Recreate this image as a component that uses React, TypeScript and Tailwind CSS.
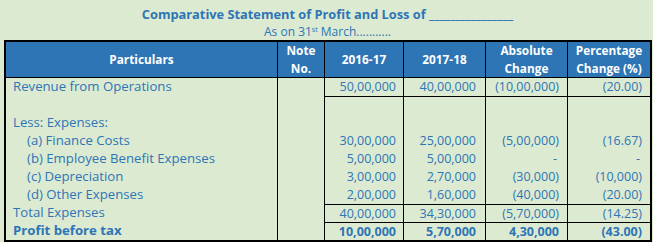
import React from "react";

type Row = {
  label: string;
  indent?: boolean;
  bold?: boolean;
  vals: string[];
  lineTop?: boolean;
};

const rows: Row[] = [
  { label: "Revenue from Operations", vals: ["50,00,000", "40,00,000", "(10,00,000)", "(20.00)"] },
  { label: "", vals: ["", "", "", ""], lineTop: true },
  { label: "Less: Expenses:", vals: ["", "", "", ""] },
  { label: "(a) Finance Costs", indent: true, vals: ["30,00,000", "25,00,000", "(5,00,000)", "(16.67)"] },
  { label: "(b) Employee Benefit Expenses", indent: true, vals: ["5,00,000", "5,00,000", "-", "-"] },
  { label: "(c) Depreciation", indent: true, vals: ["3,00,000", "2,70,000", "(30,000)", "(10,000)"] },
  { label: "(d) Other Expenses", indent: true, vals: ["2,00,000", "1,60,000", "(40,000)", "(20.00)"] },
  { label: "Total Expenses", vals: ["40,00,000", "34,30,000", "(5,70,000)", "(14.25)"], lineTop: true },
  { label: "Profit before tax", bold: true, vals: ["10,00,000", "5,70,000", "4,30,000", "(43.00)"], lineTop: true },
];

const numPad = ["pr-[7px]", "pr-[9px]", "pr-[8px]", "pr-[8px]"];
const numBorder = ["border-r", "border-r", "border-r", ""];

export default function App() {
  return (
    <div
      className="w-[653px] h-[242px] bg-[#dcead1] text-[#2e75b6] overflow-hidden"
      style={{ fontFamily: "'Open Sans', 'Noto Sans', sans-serif" }}
    >
      <div className="h-[40px] flex flex-col items-center pl-[2px]">
        <div className="mt-[5px] h-[19px] leading-[19px] text-[12.8px] font-bold whitespace-nowrap">
          Comparative Statement of Profit and Loss of ________________
        </div>
        <div className="h-[16px] leading-[16px] text-[12px] whitespace-nowrap">
          As on 31<span className="relative -top-[4px] text-[7px]">st</span> March...........
        </div>
      </div>
      <div className="ml-[4px] w-[648px] border-2 border-black">
        <div className="grid grid-cols-[272px_47px_79px_82px_82px_82px] h-[36px] bg-[#2e75b6] text-white font-bold text-[11.8px] leading-[17.5px] border-b border-black">
          <div className="border-r border-black flex items-center justify-center">Particulars</div>
          <div className="border-r border-black flex items-center justify-center text-center">
            Note
            <br />
            No.
          </div>
          <div className="border-r border-black flex items-center justify-center">2016-17</div>
          <div className="border-r border-black flex items-center justify-center">2017-18</div>
          <div className="border-r border-black flex items-center justify-center text-center">
            Absolute
            <br />
            Change
          </div>
          <div className="flex items-center justify-center text-center whitespace-nowrap">
            Percentage
            <br />
            Change (%)
          </div>
        </div>
        {rows.map((r, i) => (
          <div
            key={i}
            className={`grid grid-cols-[272px_47px_79px_82px_82px_82px] h-[18px] leading-[17px] ${
              r.bold ? "font-bold" : ""
            }`}
          >
            <div
              className={`border-r border-black whitespace-nowrap text-[13.2px] ${r.indent ? "pl-[21px]" : "pl-[7px]"}`}
            >
              {r.label}
            </div>
            <div className="border-r border-black" />
            {r.vals.map((v, j) => (
              <div
                key={j}
                className={`border-black text-right whitespace-nowrap text-[12.5px] ${numBorder[j]} ${numPad[j]} ${
                  r.lineTop ? "border-t" : ""
                } ${v === "-" ? "pr-[10px]" : ""}`}
              >
                {v}
              </div>
            ))}
          </div>
        ))}
      </div>
    </div>
  );
}
